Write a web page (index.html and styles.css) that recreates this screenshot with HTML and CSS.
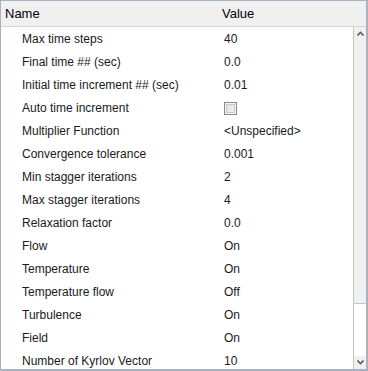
FILE: index.html
```html
<!DOCTYPE html>
<html>
<head>
<meta charset="utf-8">
<link rel="stylesheet" href="styles.css">
</head>
<body>
<div class="panel">
  <div class="header">
    <div class="hname">Name</div>
    <div class="hvalue">Value</div>
  </div>
  <div class="body">
    <div class="rows">
      <div class="row"><span class="n">Max time steps</span><span class="v">40</span></div>
      <div class="row"><span class="n">Final time ## (sec)</span><span class="v">0.0</span></div>
      <div class="row"><span class="n">Initial time increment ## (sec)</span><span class="v">0.01</span></div>
      <div class="row"><span class="n">Auto time increment</span><span class="v"><span class="cb"></span></span></div>
      <div class="row"><span class="n">Multiplier Function</span><span class="v">&lt;Unspecified&gt;</span></div>
      <div class="row"><span class="n">Convergence tolerance</span><span class="v">0.001</span></div>
      <div class="row"><span class="n">Min stagger iterations</span><span class="v">2</span></div>
      <div class="row"><span class="n">Max stagger iterations</span><span class="v">4</span></div>
      <div class="row"><span class="n">Relaxation factor</span><span class="v">0.0</span></div>
      <div class="row"><span class="n">Flow</span><span class="v">On</span></div>
      <div class="row"><span class="n">Temperature</span><span class="v">On</span></div>
      <div class="row"><span class="n">Temperature flow</span><span class="v">Off</span></div>
      <div class="row"><span class="n">Turbulence</span><span class="v">On</span></div>
      <div class="row"><span class="n">Field</span><span class="v">On</span></div>
      <div class="row"><span class="n">Number of Kyrlov Vector</span><span class="v">10</span></div>
    </div>
    <div class="scroll">
      <div class="btn up"><svg width="7" height="5" viewBox="0 0 7 5"><path d="M0.5 4.5 L3.5 1.5 L6.5 4.5" fill="none" stroke="#606060" stroke-width="1.6"/></svg></div>
      <div class="track"><div class="thumb"></div></div>
      <div class="btn down"><svg width="7" height="5" viewBox="0 0 7 5"><path d="M0.5 0.5 L3.5 3.5 L6.5 0.5" fill="none" stroke="#606060" stroke-width="1.6"/></svg></div>
    </div>
  </div>
</div>
</body>
</html>
```
FILE: styles.css
```css
html, body { margin: 0; padding: 0; background: #fff; }
.panel {
  width: 368px;
  height: 371px;
  box-sizing: border-box;
  border: 1px solid #a9b3bf;
  border-bottom-width: 2px;
  border-right-width: 2px;
  display: flex;
  flex-direction: column;
  font-family: "Segoe UI", "Liberation Sans", Arial, sans-serif;
  font-size: 12px;
  color: #1a1a1a;
  overflow: hidden;
}
.header {
  height: 25px;
  flex: none;
  background: #f0f0f0;
  border-bottom: 1px solid #d5d5d5;
  display: flex;
  align-items: center;
  font-size: 13px;
  color: #000;
}
.hname { width: 221px; padding-left: 4px; box-sizing: border-box; }
.hvalue { }
.body { flex: 1; display: flex; min-height: 0; }
.rows { flex: 1; padding-top: 0; }
.row { height: 23px; display: flex; align-items: center; }
.n { width: 223px; padding-left: 21px; box-sizing: border-box; white-space: nowrap; }
.v { display: flex; align-items: center; }
.cb {
  width: 11px; height: 11px;
  border: 1px solid #8a8a8a;
  background: linear-gradient(135deg, #dcdcdc, #f6f6f6);
  box-shadow: inset 0 0 0 1px #f4f4f4, inset 0 0 0 2px #c8c8c8;
  margin-top: 1px;
}
.scroll {
  width: 12px;
  flex: none;
  display: flex;
  flex-direction: column;
  border-left: 1px solid #c0c6ce;
  background: #f0f0f0;
}
.btn { height: 13px; flex: none; display: flex; align-items: center; justify-content: center; background: #f0f0f0; }
.track { flex: 1; display: flex; flex-direction: column; }
.thumb { height: 263px; background: #f0f0f0; border-bottom: 1px solid #c0c6ce; }
.track { background: #fff; }
```
